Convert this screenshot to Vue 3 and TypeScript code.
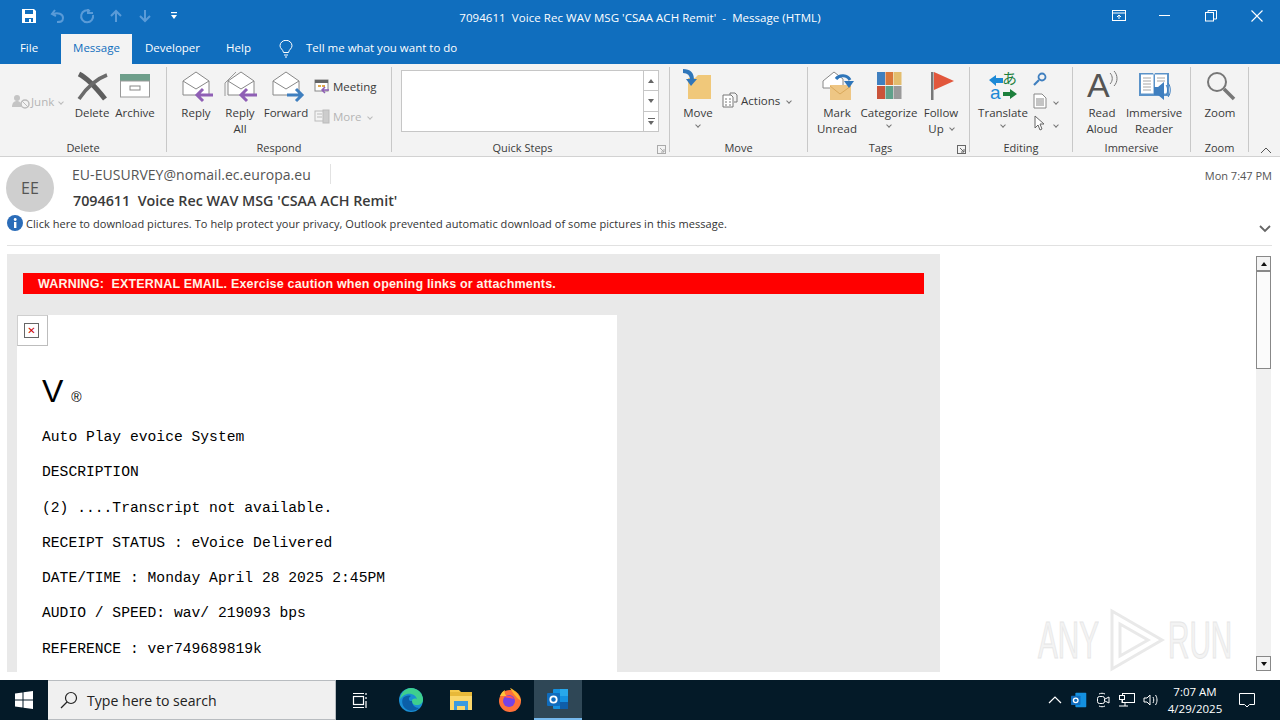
<script setup lang="ts">
const titleText = "7094611  Voice Rec WAV MSG 'CSAA ACH Remit'  -  Message (HTML)"
const subjectText = "7094611  Voice Rec WAV MSG 'CSAA ACH Remit'"
const bannerText = 'WARNING:  EXTERNAL EMAIL. Exercise caution when opening links or attachments.'
const lines: string[] = [
  'Auto Play evoice System',
  'DESCRIPTION',
  '(2) ....Transcript not available.',
  'RECEIPT STATUS : eVoice Delivered',
  'DATE/TIME : Monday April 28 2025 2:45PM',
  'AUDIO / SPEED: wav/ 219093 bps',
  'REFERENCE : ver749689819k',
]
</script>

<template>
  <div class="window">
    <header class="titlebar">
      <div class="qat">
        <svg class="qi" viewBox="0 0 16 16"><path d="M1 1h12l2 2v12H1z" fill="#fff"/><rect x="4" y="2" width="8" height="4" fill="#106ebe"/><rect x="4" y="10" width="8" height="4" fill="#106ebe"/><rect x="8" y="11" width="2" height="3" fill="#fff"/></svg>
        <svg class="qi" viewBox="0 0 16 16" fill="none" stroke="#5a9bd8" stroke-width="2"><path d="M5 2 2 6l4 2"/><path d="M3 6c5-2 10 0 10 4s-3 4-6 4"/></svg>
        <svg class="qi" viewBox="0 0 16 16" fill="none" stroke="#5a9bd8" stroke-width="2"><path d="M11 3a6 6 0 1 0 3 4"/><path d="M9 1v4h5"/></svg>
        <svg class="qi" viewBox="0 0 16 16" fill="none" stroke="#5a9bd8" stroke-width="2"><path d="M8 14V3M3 8l5-5 5 5"/></svg>
        <svg class="qi" viewBox="0 0 16 16" fill="none" stroke="#5a9bd8" stroke-width="2"><path d="M8 2v11M3 8l5 5 5-5"/></svg>
        <svg class="qi small" viewBox="0 0 8 10"><rect x="1" y="1" width="6" height="1.2" fill="#fff"/><path d="M1 4h6L4 8z" fill="#fff"/></svg>
      </div>
      <div class="title">{{ titleText }}</div>
      <div class="winbtns">
        <span class="wb"><svg width="14" height="12" viewBox="0 0 14 12" fill="none" stroke="#fff"><rect x=".5" y=".5" width="13" height="10"/><path d="M1 3h12M7 9V5M5 7l2-2 2 2"/></svg></span>
        <span class="wb"><svg width="12" height="2" viewBox="0 0 12 2"><rect width="11" height="1" fill="#fff"/></svg></span>
        <span class="wb"><svg width="12" height="12" viewBox="0 0 12 12" fill="none" stroke="#fff"><rect x=".5" y="2.5" width="8" height="8.5"/><path d="M3 2.5V.5h8.5V9H9"/></svg></span>
        <span class="wb"><svg width="12" height="12" viewBox="0 0 12 12" stroke="#fff" stroke-width="1.1"><path d="M.5.5l11 11M11.500.5l-11 11"/></svg></span>
      </div>
    </header>

    <nav class="tabs">
      <span class="tab t-file">File</span>
      <span class="tab t-msg">Message</span>
      <span class="tab t-dev">Developer</span>
      <span class="tab t-help">Help</span>
      <svg class="bulb" width="14" height="18" viewBox="0 0 14 18" fill="none" stroke="#fff"><path d="M4.500 12.500C4 9.500 1 8.500 1 5.800A6 5.500 0 0 1 13 5.800C13 8.500 10 9.500 9.500 12.500z"/><path d="M5 15h4M6 17h2"/></svg>
      <span class="tell">Tell me what you want to do</span>
    </nav>

    <section class="ribbon">
      <div class="group g-delete">
        <div class="gbody">
          <div class="junk">
            <svg width="18" height="18" viewBox="0 0 18 18"><circle cx="5" cy="6" r="3" fill="#c4c4c4"/><path d="M0 15c0-4 2-6 5-6s4 2 4 6z" fill="#c4c4c4"/><circle cx="13" cy="12" r="4" fill="none" stroke="#bbb" stroke-width="1.500"/><path d="M10 9l6 6" stroke="#bbb"/></svg>
            <span>Junk</span><i class="caret light"></i>
          </div>
          <div class="btn w40">
            <svg class="ic" viewBox="0 0 34 32"><path d="M4 4C12 8 19 15 30 29" stroke="#5e5e5e" stroke-width="5" fill="none"/><path d="M32 5C21 9 12 17 4 29" stroke="#6b6b6b" stroke-width="3.500" fill="none"/></svg>
            <span>Delete</span>
          </div>
          <div class="btn w46">
            <svg class="ic" viewBox="0 0 34 32"><rect x="2" y="4" width="30" height="7" fill="#6e9f8b"/><rect x="2.500" y="11" width="29" height="16" fill="#fff" stroke="#999"/><rect x="12" y="16" width="10" height="4" fill="none" stroke="#888"/></svg>
            <span>Archive</span>
          </div>
        </div>
        <div class="glabel">Delete</div>
      </div>

      <div class="group g-respond">
        <div class="gbody">
          <div class="btn w44">
            <svg class="ic" viewBox="0 0 34 32" fill="none"><path d="M4 11 17 2l13 9v14H4z" fill="#fff" stroke="#888"/><path d="M4 11l13 8 13-8" stroke="#888"/><path d="M34 25H19M24 19l-6 6 6 6" stroke="#8f5fb5" stroke-width="3"/></svg>
            <span>Reply</span>
          </div>
          <div class="btn w44">
            <svg class="ic" viewBox="0 0 34 32" fill="none"><path d="M2 13 13 2" stroke="#999"/><path d="M2 13v13" stroke="#999"/><path d="M5 11 18 2l13 9v14H5z" fill="#fff" stroke="#888"/><path d="M5 11l13 8 13-8" stroke="#888"/><path d="M34 25H19M24 19l-6 6 6 6" stroke="#8f5fb5" stroke-width="3"/></svg>
            <span>Reply<br>All</span>
          </div>
          <div class="btn w48">
            <svg class="ic" viewBox="0 0 34 32" fill="none"><path d="M4 11 17 2l13 9v14H4z" fill="#fff" stroke="#888"/><path d="M4 11l13 8 13-8" stroke="#888"/><path d="M18 25h15M27 19l6 6-6 6" stroke="#3f7fbf" stroke-width="3"/></svg>
            <span>Forward</span>
          </div>
          <div class="stack s-respond">
            <div class="sitem">
              <svg width="16" height="15" viewBox="0 0 16 15"><rect x="1" y="1" width="13" height="11" fill="#fff" stroke="#888"/><rect x="1" y="1" width="13" height="3" fill="#666"/><rect x="4" y="6" width="3" height="2" fill="#e2a94a"/><rect x="8" y="6" width="3" height="2" fill="#e2a94a"/><path d="M15 11H8M11 8l-3 3 3 3" stroke="#8f5fb5" stroke-width="1.500" fill="none"/></svg>
              <span>Meeting</span>
            </div>
            <div class="sitem dim">
              <svg width="16" height="15" viewBox="0 0 16 15" fill="none" stroke="#bbb"><rect x="1" y="2" width="9" height="10"/><rect x="9" y="1" width="6" height="13" fill="#ccc"/><path d="M3 5h5M3 8h5"/></svg>
              <span>More</span><i class="caret light"></i>
            </div>
          </div>
        </div>
        <div class="glabel">Respond</div>
      </div>

      <div class="group g-quick">
        <div class="gbody">
          <div class="qsbox">
            <div class="qslist"></div>
            <div class="qsscroll">
              <span><i class="tri up"></i></span>
              <span><i class="tri down"></i></span>
              <span class="more"><i class="tri down"></i></span>
            </div>
          </div>
        </div>
        <div class="glabel with-launch">Quick Steps</div>
        <svg class="launch" width="9" height="9" viewBox="0 0 9 9" fill="none" stroke="#aaa"><rect x=".5" y=".5" width="8" height="8"/><path d="M3 3l4 4M7 4v3H4"/></svg>
      </div>

      <div class="group g-move">
        <div class="gbody">
          <div class="btn w44">
            <svg class="ic" viewBox="0 0 34 32"><path d="M7 8h7l3-3h13v24H7z" fill="#f0c87a"/><path d="M2 1c6 0 9 3 9 9" stroke="#2f76ba" stroke-width="4" fill="none"/><path d="M5 9h11l-6 7z" fill="#2f76ba"/></svg>
            <span>Move</span>
            <i class="caret"></i>
          </div>
          <div class="sitem s-actions">
            <svg width="16" height="16" viewBox="0 0 16 16" fill="none" stroke="#777"><path d="M1 3h8l2 2v10H1z" fill="#fff"/><path d="M3 7h2M7 7h2M3 10h2M7 10h2M3 13h2M7 13h2"/><path d="M8 3V1h5l2 2v7h-3"/></svg>
            <span>Actions</span><i class="caret"></i>
          </div>
        </div>
        <div class="glabel">Move</div>
      </div>

      <div class="group g-tags">
        <div class="gbody">
          <div class="btn w48">
            <svg class="ic" viewBox="0 0 34 32" fill="none"><path d="M3 11 14 2l9 7v9H3z" fill="#fff" stroke="#888"/><path d="M10 15h21v15H10z" fill="#eec684"/><path d="M10 16l10 8 11-8" stroke="#d9a95c"/><path d="M16 9a8 7 0 0 1 14 1" stroke="#2f76ba" stroke-width="3"/><path d="M24 11h10l-5 7z" fill="#2f76ba"/></svg>
            <span>Mark<br>Unread</span>
          </div>
          <div class="btn w56">
            <svg class="ic" viewBox="0 0 34 32"><rect x="5" y="2" width="8" height="13" fill="#3f7fbf"/><rect x="13.500" y="2" width="7.500" height="13" fill="#d9763a"/><rect x="21.500" y="2" width="8" height="13" fill="#e3bd6e"/><rect x="5" y="16" width="8" height="13" fill="#c9533a"/><rect x="13.500" y="16" width="7.500" height="13" fill="#5fa08a"/><rect x="21.500" y="16" width="8" height="13" fill="#9a9a9a"/></svg>
            <span>Categorize</span>
            <i class="caret"></i>
          </div>
          <div class="btn w48">
            <svg class="ic" viewBox="0 0 34 32"><rect x="7" y="2" width="2.500" height="28" fill="#777"/><path d="M10 2l20 9-20 9z" fill="#e2573c"/></svg>
            <span>Follow<br>Up <i class="caret inline"></i></span>
          </div>
        </div>
        <div class="glabel with-launch">Tags</div>
        <svg class="launch" width="9" height="9" viewBox="0 0 9 9" fill="none" stroke="#666"><rect x=".5" y=".5" width="8" height="8"/><path d="M3 3l4 4M7 4v3H4"/></svg>
      </div>

      <div class="group g-edit">
        <div class="gbody">
          <div class="btn w50">
            <svg class="ic" viewBox="0 0 34 32"><path d="M3 10l7-5v3h7v5h-7v3z" fill="#1c89d6"/><text x="16" y="14" font-size="15" fill="#1d7f3c" class="svgcjk">あ</text><text x="4" y="29" font-size="19" fill="#1c89d6" class="svgsans">a</text><path d="M17 22h7v-3l7 5-7 5v-3h-7z" fill="#1d7f3c"/></svg>
            <span>Translate</span>
            <i class="caret"></i>
          </div>
          <div class="stack s-edit">
            <svg width="14" height="15" viewBox="0 0 14 15" fill="none"><circle cx="9" cy="5" r="3.500" stroke="#3f7fbf" stroke-width="1.800"/><path d="M6 8l-5 5" stroke="#3f7fbf" stroke-width="2.200"/></svg>
            <div class="eitem">
              <svg width="14" height="16" viewBox="0 0 14 16" fill="none" stroke="#888"><path d="M1 1h8l4 4v10H1z" fill="#fff"/><path d="M3 6h8M3 8h8M3 10h8M3 12h8"/></svg>
              <i class="caret"></i>
            </div>
            <div class="eitem">
              <svg width="14" height="17" viewBox="0 0 14 17" fill="#fff" stroke="#666"><path d="M2 1v12l3-3 2 5 2-1-2-5h4z"/></svg>
              <i class="caret"></i>
            </div>
          </div>
        </div>
        <div class="glabel">Editing</div>
      </div>

      <div class="group g-imm">
        <div class="gbody">
          <div class="btn w48">
            <svg class="ic" viewBox="0 0 34 32"><text x="2" y="27" font-size="34" fill="#555" class="svgsans">A</text><path d="M25 3c3 3 3 8 0 11M29 1c4 4 4 11 0 15" stroke="#777" fill="none"/></svg>
            <span>Read<br>Aloud</span>
          </div>
          <div class="btn w56">
            <svg class="ic" viewBox="0 0 34 32"><path d="M2 3h14l1 2 1-2h14v23H2z" fill="#5b93c9"/><path d="M4 4.500h12.500v19H4zM18 4.500h12v19H18z" fill="#fff"/><path d="M6 8h8M6 11h8M6 14h8M6 17h8M6 20h8M20 8h8M20 11h8" stroke="#a5a5a5"/><path d="M17 17h4l6-5v18l-6-5h-4z" fill="#3f7fbf"/><path d="M29 15c2 2 2 8 0 10M31 13c3 3 3 11 0 14" stroke="#3f7fbf" fill="none"/></svg>
            <span>Immersive<br>Reader</span>
          </div>
        </div>
        <div class="glabel">Immersive</div>
      </div>

      <div class="group g-zoom">
        <div class="gbody">
          <div class="btn w56">
            <svg class="ic" viewBox="0 0 34 32" fill="none"><circle cx="14" cy="12" r="9" stroke="#777" stroke-width="2"/><path d="M21 19l10 10" stroke="#777" stroke-width="3.500"/></svg>
            <span>Zoom</span>
          </div>
        </div>
        <div class="glabel">Zoom</div>
      </div>

      <div class="collapse">
        <svg width="12" height="7" viewBox="0 0 12 7" fill="none" stroke="#555"><path d="M1 6l5-5 5 5"/></svg>
      </div>
    </section>

    <section class="mailhead">
      <div class="headrow">
        <div class="avatar">EE</div>
        <div class="headtext">
          <div class="senderline"><span class="sender">EU-EUSURVEY@nomail.ec.europa.eu</span><span class="vsep"></span><span class="time">Mon 7:47 PM</span></div>
          <div class="subject">{{ subjectText }}</div>
        </div>
      </div>
      <div class="inforow">
        <svg width="16" height="16" viewBox="0 0 16 16"><circle cx="8" cy="8" r="8" fill="#2b6cb8"/><rect x="7" y="7" width="2.400" height="6" fill="#fff"/><circle cx="8.200" cy="4.500" r="1.400" fill="#fff"/></svg>
        <span class="infotext">Click here to download pictures. To help protect your privacy, Outlook prevented automatic download of some pictures in this message.</span>
        <svg class="chev" width="12" height="8" viewBox="0 0 12 8" fill="none" stroke="#666" stroke-width="1.800"><path d="M1 1l5 5 5-5"/></svg>
      </div>
    </section>

    <section class="reading">
      <div class="canvas">
        <div class="banner">{{ bannerText }}</div>
        <div class="card">
          <div class="brokenimg"><span class="brokenx">✕</span></div>
          <div class="cardinner">
            <div class="logo"><span class="bigv">V</span><span class="reg">®</span></div>
            <p v-for="line in lines" :key="line" class="mono">{{ line }}</p>
          </div>
        </div>
      </div>
      <div class="scrollbar">
        <span class="sbtn"><i class="tri up dark"></i></span>
        <div class="strack"><div class="sthumb"></div></div>
        <span class="sbtn"><i class="tri down dark"></i></span>
      </div>
      <div class="watermark">
        <span>ANY</span>
        <svg width="62" height="64" viewBox="0 0 62 64" fill="none" stroke="#e9e9e9" stroke-width="3"><path d="M8 3v58l50-29z"/><path d="M16 16v32l28-16z"/></svg>
        <span>RUN</span>
      </div>
    </section>

    <footer class="taskbar">
      <span class="start"><svg width="18" height="18" viewBox="0 0 18 18" fill="#fff"><path d="M0 2.500 7.500 1.400V8.500H0zM8.500 1.300 18 0V8.500H8.500zM0 9.500H7.500V16.600L0 15.500zM8.500 9.500H18V18L8.500 16.700z"/></svg></span>
      <div class="search">
        <svg width="18" height="18" viewBox="0 0 18 18" fill="none" stroke="#222" stroke-width="1.200"><circle cx="11" cy="7" r="5.500"/><path d="M7 11l-6 6"/></svg>
        <span>Type here to search</span>
      </div>
      <span class="tbi ti-task"><svg width="16" height="17" viewBox="0 0 16 17" fill="none" stroke="#fff" stroke-width="1.200"><rect x="1.500" y="4.500" width="10" height="8"/><path d="M1 1.500h11M1 15.500h11M14 1v2M14 5v2M14 9v7"/></svg></span>
      <span class="tbi ti-edge"><svg width="24" height="24" viewBox="0 0 24 24"><circle cx="12" cy="12" r="12" fill="#1a8fd4"/><path d="M12 0a12 12 0 0 1 12 12c0 3-3 5-6 5-4 0-5-2-5-4 0-3 5-3 5-1 0-4-5-7-10-6C4 7 2 10 1 11 2 5 6 0 12 0z" fill="#3ecf8e"/><path d="M13 13c0 4 3 7 7 7-3 3-9 4-13 1-3-2-5-7-3-11 2-2 5-3 8-2-2 1-3 3-1 5z" fill="#0b5fa8"/></svg></span>
      <span class="tbi ti-files"><svg width="24" height="22" viewBox="0 0 24 22"><path d="M1 1h9l2 2h11v18H1z" fill="#f5c94c"/><rect x="1" y="3" width="22" height="4" fill="#e8b93a"/><rect x="1" y="7" width="22" height="14" fill="#fbd76b"/><path d="M5 12h14v9h-3v-4H8v4H5z" fill="#3b9be0"/></svg></span>
      <span class="tbi ti-fox"><svg width="24" height="24" viewBox="0 0 24 24"><circle cx="12" cy="13" r="11" fill="#ff7139"/><path d="M12 0c5 2 9 6 11 13-4-3-7-6-11-13z" fill="#ffb52e"/><path d="M2 8c1-3 3-5 5-6-1 3 0 5 2 6z" fill="#ffc43a"/><circle cx="11" cy="13" r="6" fill="#7542e5"/><path d="M6 9c3-2 8-2 10 2-3-1-6-1-10-2z" fill="#ff4f5e"/></svg></span>
      <span class="tbi ti-outlook"><svg width="22" height="22" viewBox="0 0 22 22"><rect x="6" y="1" width="15" height="20" rx="1" fill="#1490df"/><rect x="13" y="1" width="8" height="7" fill="#28a8ea"/><rect x="13" y="14" width="8" height="7" fill="#0f5ea8"/><rect x="0" y="5" width="13" height="13" rx="1" fill="#0f6cbd"/><circle cx="6.500" cy="11.500" r="3.200" fill="none" stroke="#fff" stroke-width="1.800"/></svg></span>
      <div class="tray">
        <svg class="tr" width="16" height="8" viewBox="0 0 14 8" fill="none" stroke="#fff" stroke-width="1.200"><path d="M1 7l6-6 6 6"/></svg>
        <svg class="tr" width="16" height="16" viewBox="0 0 22 22"><rect x="6" y="1" width="15" height="20" rx="1" fill="#1490df"/><rect x="0" y="5" width="13" height="13" rx="1" fill="#0f6cbd"/><circle cx="6.500" cy="11.500" r="3.200" fill="none" stroke="#fff" stroke-width="1.800"/></svg>
        <svg class="tr" width="16" height="16" viewBox="0 0 14 16" fill="none" stroke="#fff"><rect x="1.500" y="4.500" width="7" height="7" rx="2"/><path d="M9 7l4-2v6l-4-2M3 2c2-1 4-1 6 0M3 14c2 1 4 1 6 0"/></svg>
        <svg class="tr" width="16" height="14" viewBox="0 0 16 14" fill="none" stroke="#fff"><rect x="3.500" y=".5" width="12" height="9"/><rect x=".5" y="2.500" width="5" height="4" fill="#041a28"/><path d="M3 7v3M0 13h9M6 10v3"/></svg>
        <svg class="tr" width="16" height="14" viewBox="0 0 16 14" fill="none" stroke="#fff"><path d="M1 5h3l3-3v10L4 9H1zM10 4c1 2 1 4 0 6M12.500 2c2 3 2 7 0 10"/></svg>
        <div class="clock"><div>7:07 AM</div><div>4/29/2025</div></div>
        <svg class="notif" width="16" height="16" viewBox="0 0 16 16" fill="none" stroke="#fff"><path d="M.5 1.500h15v11h-5L8 15l-2.500-2.500h-5z"/></svg>
      </div>
    </footer>
  </div>
</template>

<style>
html, body { margin: 0; padding: 0; overflow: hidden; background: #fff; }
</style>

<style scoped>
.window { width: 1280px; height: 720px; display: flex; flex-direction: column; overflow: hidden; font-family: "Open Sans", "Noto Sans", sans-serif; color: #333; background: #fff; }
.titlebar { height: 32px; background: #106ebe; display: grid; grid-template-columns: 1fr auto 1fr; align-items: center; color: #fff; }
.qat { display: flex; align-items: center; padding-left: 21px; gap: 13px; }
.qi { width: 16px; height: 16px; }
.qi.small { width: 8px; height: 10px; margin-left: 4px; }
.title { font-size: 11.500px; white-space: pre; padding-top: 3px; letter-spacing: 0.05px; }
.winbtns { display: flex; justify-content: flex-end; }
.wb { width: 46px; height: 32px; display: flex; align-items: center; justify-content: center; }

.tabs { height: 32px; background: #106ebe; display: flex; align-items: flex-end; color: #fff; font-size: 11.500px; }
.tab { height: 30px; display: flex; align-items: center; justify-content: center; flex: none; box-sizing: border-box; padding-bottom: 3px; }
.t-file { width: 58px; margin-right: 3px; }
.t-msg { width: 71px; background: #f3f3f3; color: #106ebe; }
.t-dev { width: 81px; }
.t-help { width: 51px; }
.bulb { margin: 0 13px 6px 15px; }
.tell { height: 30px; display: flex; align-items: center; padding-bottom: 3px; box-sizing: border-box; }

.ribbon { height: 93px; box-sizing: border-box; background: #f3f3f3; border-bottom: 1px solid #d2d2d2; display: flex; font-size: 11.500px; color: #3a3a3a; }
.group { position: relative; display: flex; flex-direction: column; box-sizing: border-box; border-right: 1px solid #c8c8c8; margin: 3px 0 4px; flex: none; }
.gbody { flex: 1; display: flex; padding-top: 3px; min-height: 0; }
.glabel { height: 18px; line-height: 18px; text-align: center; font-size: 11px; margin-bottom: -5px; }
.with-launch { padding-right: 16px; }
.launch { position: absolute; right: 3px; bottom: -2px; }
.g-delete { width: 167px; }
.g-delete .gbody { padding-left: 12px; }
.g-respond { width: 225px; }
.g-respond .gbody { padding-left: 7px; }
.g-quick { width: 278px; }
.g-quick .gbody { padding-left: 9px; }
.g-move { width: 138px; }
.g-move .gbody { padding-left: 6px; }
.g-tags { width: 162px; }
.g-tags .gbody { padding-left: 5px; }
.g-edit { width: 103px; }
.g-edit .gbody { padding-left: 8px; }
.g-imm { width: 118px; }
.g-imm .gbody { padding-left: 5px; }
.g-zoom { width: 58px; }
.g-zoom .gbody { padding-left: 1px; }
.btn { display: flex; flex-direction: column; align-items: center; text-align: center; line-height: 16px; flex: none; }
.ic { width: 34px; height: 32px; margin-bottom: 3px; flex: none; overflow: visible; }
.svgcjk { font-family: "Noto Sans CJK JP", sans-serif; }
.svgsans { font-family: "Liberation Sans", sans-serif; }
.w40 { width: 40px; } .w44 { width: 44px; } .w46 { width: 46px; } .w48 { width: 48px; } .w50 { width: 50px; } .w56 { width: 56px; }
.junk { width: 60px; height: 50px; display: flex; align-items: center; color: #b5b5b5; gap: 1px; padding-top: 12px; box-sizing: border-box; }
.caret { display: inline-block; width: 3px; height: 3px; border-right: 1px solid #777; border-bottom: 1px solid #777; transform: rotate(45deg); margin: 2px 0 0 4px; vertical-align: middle; }
.caret.light { border-color: #bbb; }
.caret.inline { margin: -3px 0 0 3px; }
.btn > .caret { margin: 2px 0 0; }
.stack { display: flex; flex-direction: column; }
.s-respond { padding: 8px 0 0 4px; gap: 14px; }
.sitem { display: flex; align-items: center; gap: 3px; height: 16px; }
.sitem.dim { color: #b5b5b5; }
.s-actions { height: 16px; margin: 22px 0 0 2px; }
.s-edit { padding: 2px 0 0 5px; gap: 6px; }
.eitem { display: flex; align-items: center; gap: 3px; }
.qsbox { width: 258px; height: 62px; box-sizing: border-box; border: 1px solid #c6c6c6; background: #fff; display: flex; }
.qslist { width: 243px; }
.qsscroll { width: 14px; border-left: 1px solid #c6c6c6; display: flex; flex-direction: column; }
.qsscroll span { flex: 1; display: flex; align-items: center; justify-content: center; border-bottom: 1px solid #c6c6c6; }
.qsscroll span:last-child { border-bottom: 0; flex-direction: column; }
.more::before { content: ""; width: 7px; height: 1px; background: #666; margin-bottom: 2px; }
.tri { display: block; width: 0; height: 0; border-left: 3.500px solid transparent; border-right: 3.500px solid transparent; }
.tri.up { border-bottom: 4px solid #666; }
.tri.down { border-top: 4px solid #666; }
.tri.dark.up { border-bottom-color: #111; }
.tri.dark.down { border-top-color: #111; }
.collapse { flex: 1; display: flex; align-items: flex-end; justify-content: flex-end; padding: 0 8px 2px 0; }

.mailhead { height: 89px; flex: none; margin: 0 8px 0 7px; box-sizing: border-box; border-bottom: 1px solid #e1e1e1; display: flex; flex-direction: column; }
.headrow { display: flex; padding-top: 7px; margin-left: -1px; }
.avatar { width: 48px; height: 48px; border-radius: 50%; background: #cfcfcf; color: #555; display: flex; align-items: center; justify-content: center; font-size: 16px; flex: none; }
.headtext { flex: 1; padding: 0 0 0 18px; }
.senderline { display: flex; align-items: center; height: 20px; }
.sender { font-size: 14px; color: #555; letter-spacing: 0.05px; }
.vsep { width: 1px; height: 20px; background: #e2e2e2; margin-left: 19px; }
.time { margin-left: auto; font-size: 11px; color: #555; padding-top: 2px; }
.subject { font-size: 14.300px; font-weight: 600; color: #3a3a3a; white-space: pre; margin-top: 7px; padding-left: 1px; }
.inforow { display: flex; align-items: center; height: 18px; margin-top: 2px; }
.infotext { font-size: 11px; color: #333; margin-left: 3px; white-space: nowrap; letter-spacing: 0.05px; }
.chev { margin: 12px 1px 0 auto; }

.reading { position: relative; flex: 1; min-height: 0; display: flex; padding: 8px 9px 8px 7px; box-sizing: border-box; }
.canvas { width: 933px; background: #e9e9e9; overflow: hidden; padding: 19px 16px 0; box-sizing: border-box; flex: none; }
.banner { height: 21px; background: #f00; color: #fff2e6; font-family: "Liberation Sans", sans-serif; font-weight: 700; font-size: 12.500px; line-height: 22px; padding-left: 15px; white-space: pre; letter-spacing: 0.19px; }
.card { width: 600px; height: 500px; background: #fff; margin: 21px 0 0 -6px; }
.brokenimg { width: 31px; height: 31px; box-sizing: border-box; border: 1px solid #cfcfcf; border-right: 1px solid #bdbdbd; border-bottom: 1px solid #bdbdbd; background: #fff; display: flex; align-items: center; padding-left: 6px; }
.brokenx { width: 13px; height: 13px; border: 1px solid #666; color: #c00; font-size: 10px; font-weight: 700; line-height: 13px; text-align: center; font-family: "DejaVu Sans", sans-serif; }
.cardinner { padding: 26px 0 0 25px; }
.logo { height: 57px; display: flex; align-items: baseline; color: #000; font-family: "Liberation Sans", sans-serif; }
.bigv { font-size: 32px; line-height: 38px; }
.reg { font-size: 14px; margin-left: 8px; }
.mono { margin: 0 0 18.300px; height: 17px; line-height: 17px; font-family: "Liberation Mono", monospace; font-size: 14.670px; color: #000; white-space: pre; }
.scrollbar { margin-left: auto; width: 15px; height: 415px; margin-top: 2px; display: flex; flex-direction: column; }
.sbtn { width: 15px; height: 15px; box-sizing: border-box; border: 1px solid #888; background: #f4f4f4; display: flex; align-items: center; justify-content: center; flex: none; }
.strack { flex: 1; background: #f1f1f1; }
.sthumb { width: 15px; height: 98px; box-sizing: border-box; border: 1px solid #888; background: #fbfbfb; }
.watermark { position: absolute; left: 1038px; top: 362px; width: 194px; height: 64px; display: flex; align-items: center; justify-content: space-between; color: #f3f3f3; -webkit-text-stroke: 1px #e6e6e6; font-family: "Liberation Sans", sans-serif; font-size: 52px; pointer-events: none; }
.watermark span { transform: scaleX(.57); transform-origin: left center; flex: none; width: 64px; white-space: nowrap; }

.taskbar { height: 40px; flex: none; background: #041a28; display: flex; align-items: center; color: #fff; }
.start { width: 48px; height: 40px; display: flex; align-items: center; justify-content: center; flex: none; }
.search { width: 288px; height: 40px; box-sizing: border-box; background: #f0f0f0; border: 1px solid #b8bcc0; border-width: 1px 1px 1px 0; display: flex; align-items: center; color: #222; font-size: 14.100px; flex: none; padding-left: 12px; gap: 9px; }
.tbi { height: 40px; display: flex; align-items: center; justify-content: center; flex: none; box-sizing: border-box; }
.ti-task { width: 48px; }
.ti-edge { width: 50px; margin-left: 2px; }
.ti-files { width: 49px; }
.ti-fox { width: 49px; }
.ti-outlook { width: 48px; background: #2f4756; border-bottom: 2px solid #76b9ed; }
.tray { flex: 1; display: flex; align-items: center; justify-content: flex-end; }
.tr { margin-left: 8px; flex: none; }
.clock { width: 68px; margin-left: 2px; text-align: center; font-size: 11.500px; line-height: 17px; color: #fff; }
.notif { margin: 0 25px 0 10px; }
</style>
